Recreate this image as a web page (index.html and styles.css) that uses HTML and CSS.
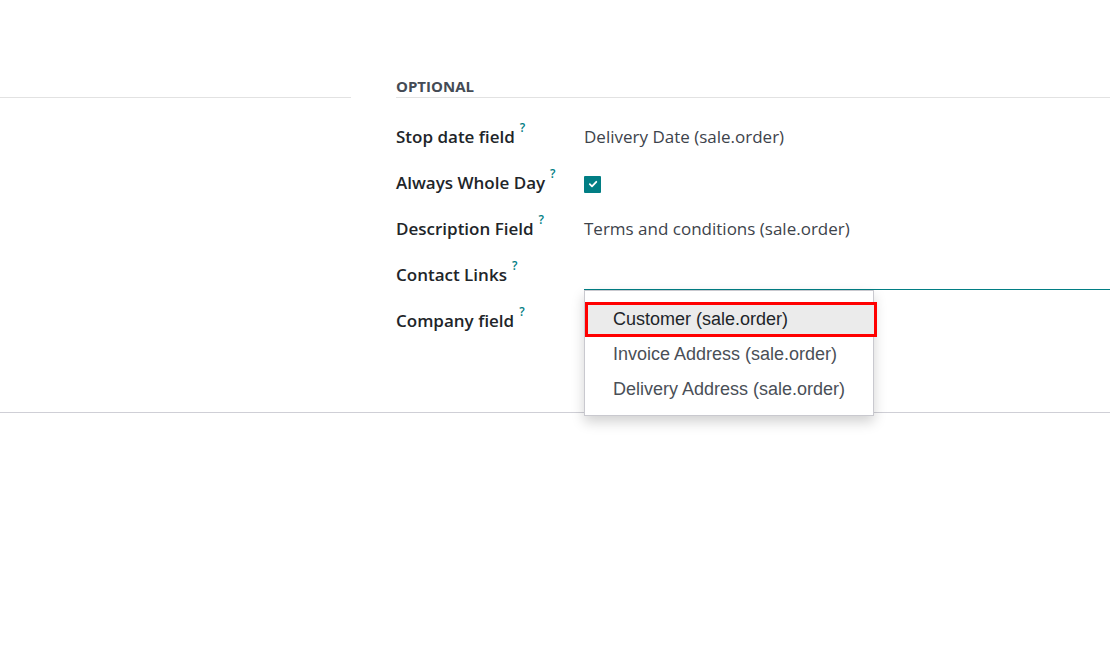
FILE: index.html
```html
<!DOCTYPE html>
<html>
<head>
<meta charset="utf-8">
<link rel="stylesheet" href="styles.css">
</head>
<body>
<div class="sheet">
  <div class="groups">
    <div class="group group-left">
      <div class="group-title"></div>
    </div>
    <div class="group group-right">
      <div class="group-title">OPTIONAL</div>
      <div class="rows">
        <div class="row">
          <div class="label">Stop date field<sup class="help">?</sup></div>
          <div class="value">Delivery Date (sale.order)</div>
        </div>
        <div class="row">
          <div class="label">Always Whole Day<sup class="help">?</sup></div>
          <div class="value">
            <span class="checkbox">
              <svg viewBox="0 0 10 10" width="10" height="10"><path d="M1.8 5.2 L4 7.3 L8.3 2.8" fill="none" stroke="#fff" stroke-width="1.8" stroke-linecap="round" stroke-linejoin="round"/></svg>
            </span>
          </div>
        </div>
        <div class="row">
          <div class="label">Description Field<sup class="help">?</sup></div>
          <div class="value">Terms and conditions (sale.order)</div>
        </div>
        <div class="row">
          <div class="label">Contact Links<sup class="help">?</sup></div>
          <div class="value field-wrap">
            <div class="input"></div>
            <ul class="dropdown">
              <li class="item active">Customer (sale.order)</li>
              <li class="item">Invoice Address (sale.order)</li>
              <li class="item">Delivery Address (sale.order)</li>
            </ul>
          </div>
        </div>
        <div class="row">
          <div class="label">Company field<sup class="help">?</sup></div>
          <div class="value"></div>
        </div>
      </div>
    </div>
  </div>
</div>
</body>
</html>
```

FILE: styles.css
```css
html, body {
  margin: 0;
  padding: 0;
  background: #fff;
}

body {
  font-family: "Open Sans", "Noto Sans", sans-serif;
  color: #212529;
  width: 1110px;
  height: 654px;
  overflow: hidden;
}

.sheet {
  padding-top: 76px;
  border-bottom: 1px solid #cfcfd6;
  height: 336px;
}

.groups {
  display: flex;
  gap: 45px;
}

.group-left {
  width: 351px;
}

.group-right {
  flex: 1;
}

.group-title {
  height: 21px;
  border-bottom: 1px solid #e2e2e2;
  font-size: 15px;
  font-weight: 700;
  color: #444b55;
  line-height: 20px;
}

.rows {
  padding-top: 25px;
  display: flex;
  flex-direction: column;
}

.row {
  display: flex;
  height: 46px;
  align-items: flex-start;
}

.label {
  width: 188px;
  font-size: 17px;
  font-weight: 600;
  color: #212529;
  line-height: 28px;
}

.help {
  font-size: 12px;
  font-weight: 600;
  color: #017e84;
  margin-left: 5px;
  vertical-align: top;
  line-height: 14px;
  position: relative;
  top: -2px;
}

.value {
  flex: 1;
  font-size: 17px;
  color: #3d434b;
  line-height: 28px;
}

.checkbox {
  display: inline-flex;
  align-items: center;
  justify-content: center;
  width: 17px;
  height: 17px;
  background: #017e84;
  border-radius: 1px;
  margin-top: 6px;
}

.field-wrap {
  position: relative;
  align-self: stretch;
}

.input {
  height: 28px;
  border-bottom: 1px solid #017e84;
}

.dropdown {
  position: absolute;
  left: 0;
  top: 29px;
  width: 288px;
  margin: 0;
  padding: 11px 0 8px;
  list-style: none;
  background: #fff;
  border: 1px solid #c9c9cf;
  box-shadow: 0 6px 12px rgba(0, 0, 0, 0.18);
  font-family: "Liberation Sans", Arial, sans-serif;
  font-size: 18px;
  color: #4a4f57;
}

.item {
  height: 35px;
  line-height: 35px;
  padding-left: 28px;
}

.item.active {
  color: #212529;
  background: #ebebeb;
  outline: 3px solid #ff0000;
  outline-offset: -3px;
  width: 292px;
  box-sizing: border-box;
}
```
